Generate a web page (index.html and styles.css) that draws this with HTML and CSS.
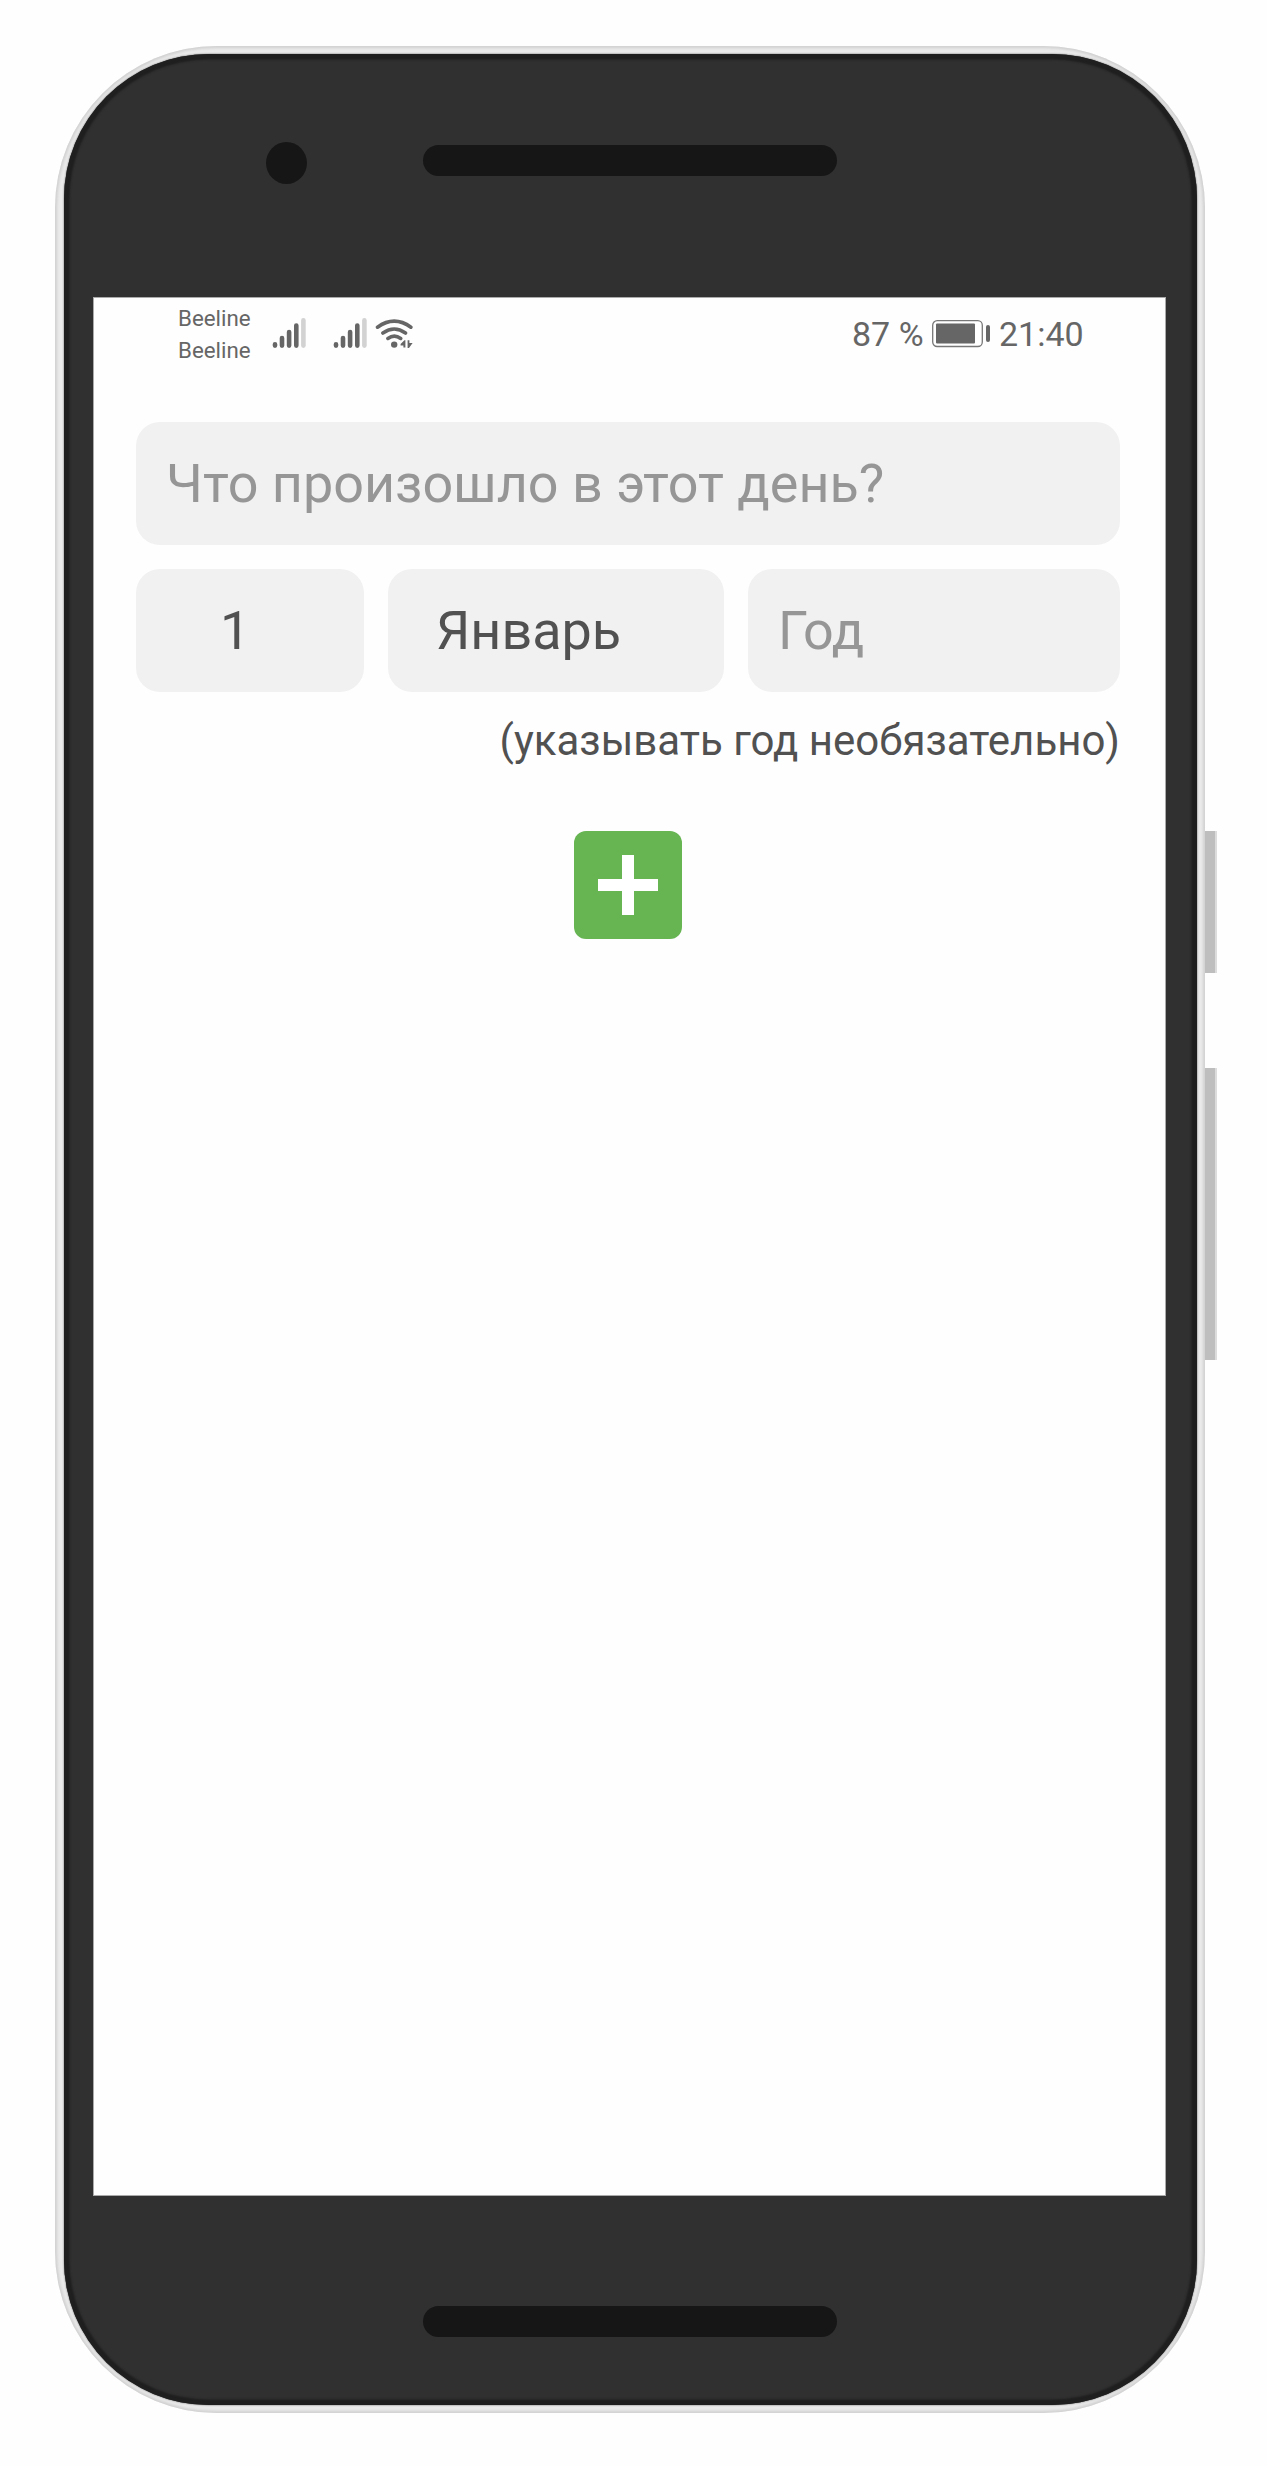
FILE: index.html
```html
<!DOCTYPE html>
<html lang="ru">
<head>
<meta charset="utf-8">
<title>Новое событие</title>
<link rel="stylesheet" href="styles.css">
</head>
<body>
<div class="phone">
  <div class="rim">
    <div class="face">
      <div class="top-bezel">
        <span class="camera"></span>
        <span class="speaker"></span>
      </div>
      <main class="screen">
        <header class="status">
          <div class="carriers"><span>Beeline</span><span>Beeline</span></div>
          <svg class="network" width="142" height="34" viewBox="0 0 142 34">
            <g id="signal" stroke-width="4.6" stroke-linecap="round" stroke="#666">
              <path d="M3 27.2v1.4M10 21v7.600M17.1 15v13.600M24.3 8.600v20"/>
              <path stroke="#d2d2d2" d="M31.4 3.400v25.200"/>
            </g>
            <use href="#signal" x="61"/>
            <g fill="none" stroke="#666" stroke-width="3.6" stroke-linecap="round">
              <path d="M105.500 10.2q16.700-12 33.400 0M110.900 16q11.300-8 22.600 0M115.900 21.400q6.400-4.400 12.800 0"/>
            </g>
            <g fill="#666">
              <circle cx="122.200" cy="27.600" r="3.200"/>
              <path d="M128.600 27l3.800-3.800h1v7.400h-2V28.500h-2.800zM135.600 23.200h1.800v2.800h3.200L137 31h-1.400z"/>
            </g>
          </svg>
          <span class="percent">87 %</span>
          <svg class="battery" width="60" height="30" viewBox="0 0 60 30">
            <rect x="1.700" y="1.700" width="49.600" height="25.800" rx="4.500" fill="#fff" stroke="#777" stroke-width="1.300"/>
            <rect x="5" y="4.500" width="39" height="20" rx="1" fill="#666"/>
            <rect x="55" y="6" width="4" height="17" rx="2" fill="#666"/>
          </svg>
          <span class="time">21:40</span>
        </header>
        <form class="event">
          <div class="field title muted">Что произошло в этот день?</div>
          <div class="date">
            <div class="field day">1</div>
            <div class="field month">Январь</div>
            <div class="field year muted">Год</div>
          </div>
          <p class="hint">(указывать год необязательно)</p>
          <button class="add" type="button" aria-label="Добавить">
            <svg width="60" height="60" viewBox="0 0 60 60"><path fill="#fff" d="M24 0h12v24h24v12H36v24H24V36H0V24h24z"/></svg>
          </button>
        </form>
      </main>
      <div class="bottom-bezel"><span class="speaker"></span></div>
    </div>
  </div>
  <div class="keys"><span class="power"></span><span class="volume"></span></div>
</div>
</body>
</html>
```
FILE: styles.css
```css
* { box-sizing: border-box; }
body {
  margin: 0;
  background: #fefefe;
  font-family: Roboto, "Noto Sans", sans-serif;
  color: #515151;
}
.phone {
  display: flex;
  height: 2466px;
  padding: 46px 0 0 55px;
}
.rim {
  width: 1150px;
  height: 2367px;
  padding: 8px 8px 8px 9px;
  border-radius: 162px;
  background: #ebebeb;
  box-shadow: inset 0 0 3px 2px #d0d0d0;
}
.face {
  display: flex;
  flex-direction: column;
  width: 1133px;
  height: 2351px;
  border-radius: 145px;
  background: #303030;
  box-shadow: 0 0 2px #555, inset 0 0 2px 5.500px #1f1f1f;
}
.top-bezel {
  display: flex;
  height: 243px;
  padding: 88px 0 0 202px;
}
.camera {
  width: 41px;
  height: 42px;
  border-radius: 50%;
  background: #161616;
}
.speaker {
  width: 414px;
  height: 31px;
  border-radius: 16px;
  background: #161616;
}
.top-bezel .speaker { margin: 3px 0 0 116px; }
.screen {
  width: 1073px;
  height: 1899px;
  margin-left: 29px;
  background: #fefefe;
  border: 1px solid #aaa;
}
.bottom-bezel {
  padding: 110px 0 0 359px;
}
.bottom-bezel .speaker { display: block; }
.keys { width: 12px; }
.keys span {
  display: block;
  background: #bebebe;
  border-right: 2px solid #dcdcdc;
}
.keys .power { height: 142px; margin-top: 785px; }
.keys .volume { height: 292px; margin-top: 95px; }

.status {
  display: flex;
  align-items: flex-start;
  height: 124px;
  padding: 0 0 0 84px;
  color: #666;
}
.carriers {
  display: flex;
  flex-direction: column;
  width: 94px;
  padding-top: 4px;
  font-size: 22.300px;
  line-height: 32px;
}
.network { margin-top: 19px; }
.percent, .time {
  font-size: 34px;
  line-height: 40px;
  margin-top: 16px;
  white-space: nowrap;
}
.percent { width: 79px; margin-left: 438px; }
.battery { margin-top: 21px; }
.time { margin-left: 8px; }

.event {
  display: flex;
  flex-direction: column;
  width: 984px;
  margin-left: 42px;
}
.field {
  height: 123px;
  border-radius: 24px;
  background: #f1f1f1;
  font-size: 53.900px;
  line-height: 123px;
  white-space: nowrap;
}
.muted { color: #969696; }
.title { padding-left: 30px; }
.date {
  display: grid;
  grid-template-columns: 228px 336px 372px;
  gap: 24px;
  margin-top: 24px;
}
.day { padding-left: 84px; }
.month { padding-left: 48px; }
.year { padding-left: 30px; }
.hint {
  margin: 24px 0 0;
  font-size: 42px;
  line-height: 50px;
  text-align: right;
}
.add {
  display: flex;
  align-items: center;
  justify-content: center;
  align-self: center;
  width: 108px;
  height: 108px;
  margin: 65px 0 0;
  padding: 0;
  border: 0;
  border-radius: 12px;
  background: #66b552;
}
```
